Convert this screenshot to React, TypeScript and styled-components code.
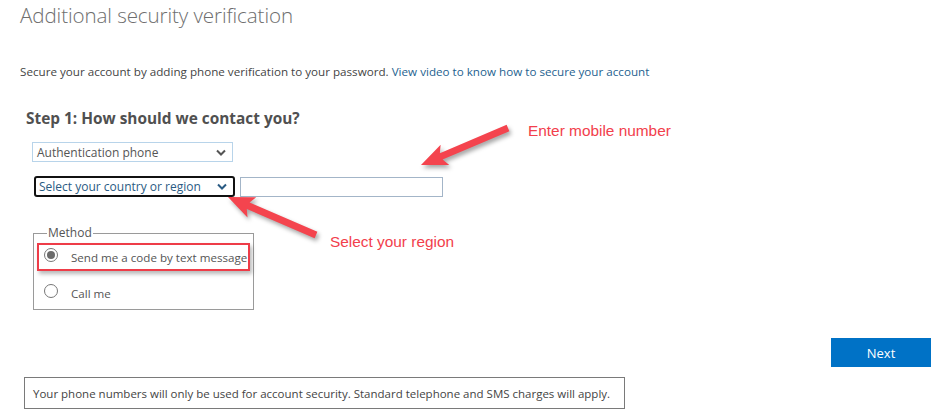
import React, { useState } from 'react';
import styled, { createGlobalStyle } from 'styled-components';

const GlobalStyle = createGlobalStyle`
  html, body {
    margin: 0;
    padding: 0;
    background: #fff;
  }
  body {
    font-family: 'Open Sans', 'Noto Sans', sans-serif;
    color: #333;
  }
`;

// --- Styled Components ---
const Page = styled.div`
  position: relative;
  width: 944px;
  height: 420px;
  overflow: hidden;
  padding: 0 0 0 20px;
  box-sizing: border-box;
`;

const Title = styled.h1`
  margin: 0;
  padding-top: 2px;
  font-size: 20.6px;
  line-height: 26px;
  font-weight: 300;
  color: #6e6e6e;
  letter-spacing: -0.1px;
`;

const Intro = styled.p`
  margin: 36px 0 0 0;
  font-size: 11.65px;
  line-height: 16px;
  color: #444;
`;

const IntroLink = styled.a`
  color: #1e5f8f;
  text-decoration: none;
`;

const StepTitle = styled.h2`
  margin: 29px 0 0 6px;
  font-size: 15.4px;
  line-height: 20px;
  font-weight: 700;
  color: #505050;
`;

const Form = styled.div`
  display: flex;
  flex-direction: column;
  margin: 13px 0 0 12px;
`;

const FieldRow = styled.div`
  display: flex;
  align-items: center;
  gap: 5px;
  margin-top: 14px;
`;

const Select = styled.div<{ $focused?: boolean }>`
  display: flex;
  align-items: center;
  justify-content: space-between;
  box-sizing: border-box;
  width: 201px;
  height: ${p => (p.$focused ? '21px' : '20px')};
  padding: 0 6px 0 ${p => (p.$focused ? '3px' : '4px')};
  margin-left: ${p => (p.$focused ? '2px' : '0')};
  border: ${p => (p.$focused ? '2px solid #111' : '1px solid #b8d4ea')};
  border-radius: ${p => (p.$focused ? '3px' : '0')};
  font-size: 12px;
  white-space: nowrap;
  color: ${p => (p.$focused ? '#2a5b83' : '#555')};
  background: #fff;
`;

const Chevron = styled.svg<{ $color: string }>`
  width: 10px;
  height: 7px;
  stroke: ${p => p.$color};
`;

const PhoneInput = styled.input`
  box-sizing: border-box;
  width: 203px;
  height: 20px;
  margin: 0;
  padding: 0 4px;
  border: 1px solid #a3b5c8;
  font-size: 12px;
  font-family: inherit;
  outline: none;
`;

const MethodBox = styled.fieldset`
  box-sizing: border-box;
  width: 221px;
  margin: 30px 0 0 1px;
  padding: 4px 3px 2px 3px;
  border: 1px solid #9a9a9a;
  min-inline-size: 0;
`;

const Legend = styled.legend`
  padding: 0 1px;
  margin-left: 10px;
  font-size: 12px;
  line-height: 12px;
  color: #555;
`;

const Option = styled.label<{ $highlight?: boolean }>`
  display: flex;
  align-items: center;
  gap: 13px;
  box-sizing: border-box;
  height: 28px;
  padding: 0 0 0 5px;
  border: 2px solid ${p => (p.$highlight ? '#ee3c48' : 'transparent')};
  box-shadow: ${p => (p.$highlight ? '2px 3px 4px rgba(0,0,0,0.28)' : 'none')};
  font-size: 11.6px;
  white-space: nowrap;
  color: #555;
  margin-top: ${p => (p.$highlight ? '0' : '8px')};
  cursor: pointer;
`;

const Radio = styled.span<{ $checked?: boolean }>`
  position: relative;
  flex: none;
  width: 12px;
  height: 12px;
  border-radius: 50%;
  border: 1px solid #777;
  background: #fff;
  margin-top: -5px;
  &::after {
    content: '';
    display: ${p => (p.$checked ? 'block' : 'none')};
    position: absolute;
    inset: 2px;
    border-radius: 50%;
    background: #6b6b6b;
  }
`;

const ActionRow = styled.div`
  display: flex;
  justify-content: flex-end;
  margin: 28px 13px 0 0;
`;

const NextButton = styled.button`
  width: 100px;
  height: 29px;
  border: none;
  background: #0072c6;
  color: #fff;
  font-family: inherit;
  font-size: 13px;
  cursor: pointer;
`;

const Notice = styled.div`
  box-sizing: border-box;
  width: 601px;
  height: 32px;
  margin: 10px 0 0 4px;
  padding: 0 8px;
  display: flex;
  align-items: center;
  border: 1px solid #7a7a7a;
  font-size: 11.5px;
  color: #444;
`;

// Red callouts drawn on top of the form
const Callouts = styled.svg`
  position: absolute;
  inset: 0;
  pointer-events: none;
`;

const CalloutLabel = styled.span<{ $x: number; $y: number }>`
  position: absolute;
  left: ${p => p.$x}px;
  top: ${p => p.$y}px;
  font-family: 'Liberation Sans', Arial, sans-serif;
  font-size: 15.4px;
  color: #f2404c;
  white-space: nowrap;
`;

const ChevronIcon = ({ color }: { color: string }) => (
  <Chevron $color={color} viewBox="0 0 10 7" fill="none" strokeWidth="2">
    <path d="M1 1.5 L5 5.5 L9 1.5" />
  </Chevron>
);

// arrow pointing along +x, tip at (len, 0)
const Arrow = ({ x, y, tx, ty }: { x: number; y: number; tx: number; ty: number }) => {
  const dx = tx - x;
  const dy = ty - y;
  const len = Math.sqrt(dx * dx + dy * dy);
  const angle = (Math.atan2(dy, dx) * 180) / Math.PI;
  const h = len - 22;
  const d = `M0 -3.5 L${h} -3.5 L${h - 4} -11 L${len} 0 L${h - 4} 11 L${h} 3.5 L0 3.5 Z`;
  return (
    <g transform={`translate(${x} ${y}) rotate(${angle})`}>
      <path d={d} fill="#f4444e" />
    </g>
  );
};

export default function App() {
  const [method, setMethod] = useState<'text' | 'call'>('text');

  return (
    <Page>
      <GlobalStyle />
      <Title>Additional security verification</Title>
      <Intro>
        Secure your account by adding phone verification to your password.{' '}
        <IntroLink href="#">View video to know how to secure your account</IntroLink>
      </Intro>
      <StepTitle>Step 1: How should we contact you?</StepTitle>
      <Form>
        <Select>
          <span>Authentication phone</span>
          <ChevronIcon color="#555" />
        </Select>
        <FieldRow>
          <Select $focused>
            <span>Select your country or region</span>
            <ChevronIcon color="#2a5b83" />
          </Select>
          <PhoneInput />
        </FieldRow>
        <MethodBox>
          <Legend>Method</Legend>
          <Option $highlight onClick={() => setMethod('text')}>
            <Radio $checked={method === 'text'} />
            <span>Send me a code by text message</span>
          </Option>
          <Option onClick={() => setMethod('call')}>
            <Radio $checked={method === 'call'} />
            <span>Call me</span>
          </Option>
        </MethodBox>
      </Form>
      <ActionRow>
        <NextButton>Next</NextButton>
      </ActionRow>
      <Notice>
        Your phone numbers will only be used for account security. Standard telephone and SMS charges will apply.
      </Notice>

      <Callouts width="944" height="420" style={{ filter: 'drop-shadow(2px 3px 2px rgba(0,0,0,0.35))' }}>
        <Arrow x={508} y={128} tx={421} ty={165} />
        <Arrow x={316} y={235} tx={228} ty={197} />
      </Callouts>
      <CalloutLabel $x={528} $y={122}>Enter mobile number</CalloutLabel>
      <CalloutLabel $x={330} $y={233}>Select your region</CalloutLabel>
    </Page>
  );
}
